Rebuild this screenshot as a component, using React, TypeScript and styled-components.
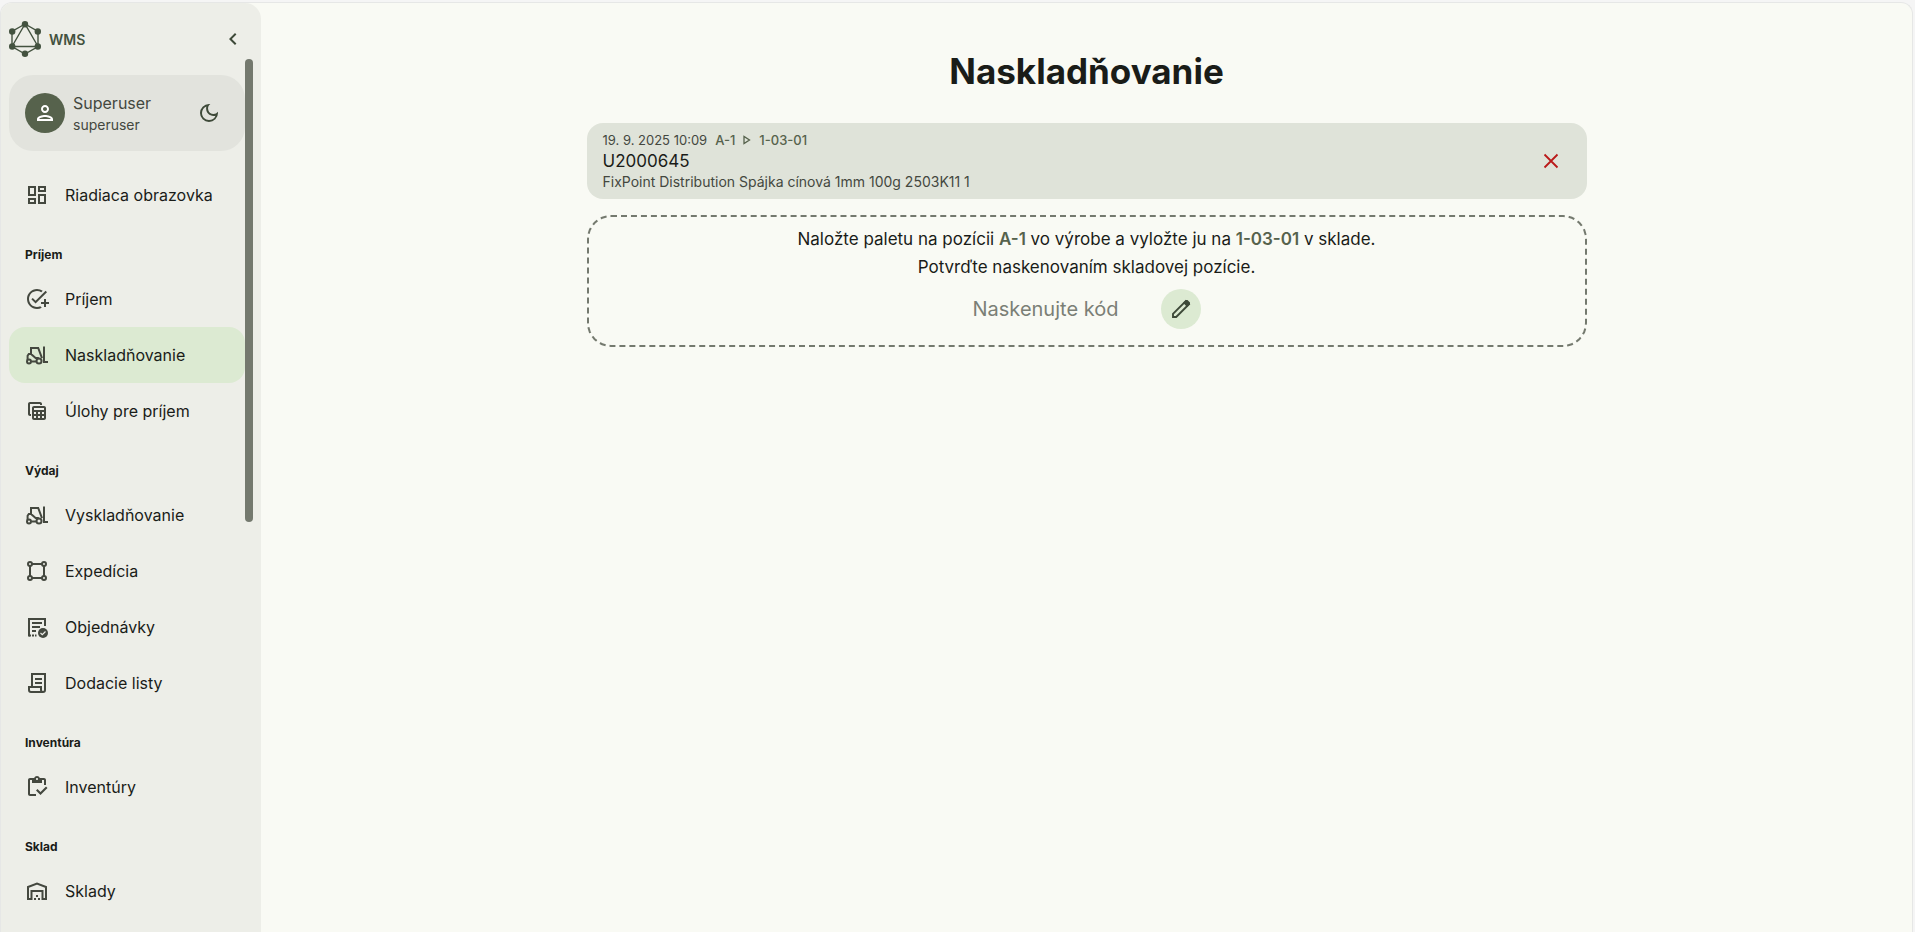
import React from "react";
import styled, { createGlobalStyle } from "styled-components";
import {
  MdAddTask,
  MdChevronLeft,
  MdOutlineDarkMode,
  MdOutlineDashboard,
  MdOutlineInventory,
  MdOutlinePerson,
  MdOutlineTableView,
} from "react-icons/md";

const GlobalStyle = createGlobalStyle`
  *, *::before, *::after { box-sizing: border-box; }
  body {
    margin: 0;
    background: #f5f5f5;
    color: #1a1c18;
    font-family: Inter, "Liberation Sans", sans-serif;
    font-size: 16px;
  }
  button, input { font: inherit; color: inherit; }
  h1, h2, p { margin: 0; }
`;

const Shell = styled.div`
  display: flex;
  height: calc(100vh - 2px);
  margin: 2px 2px 0 0;
  border: 1px solid #e6e7e6;
  border-bottom: 0;
  border-radius: 12px 12px 0 0;
  overflow: hidden;
  background: #f9faf4;
`;

const Sidebar = styled.aside`
  display: flex;
  flex-direction: column;
  flex: 0 0 260px;
  padding-top: 16px;
  border-radius: 0 16px 0 0;
  background: #edeee8;
`;

const SidebarHeader = styled.div`
  display: flex;
  align-items: center;
  gap: 8px;
  height: 40px;
  padding: 0 8px;
`;

const Brand = styled.span`
  flex: 1;
  color: #43523f;
  font-size: 14px;
  font-weight: 600;
`;

const IconButton = styled.button<{ $tone?: "plain" | "tonal" | "danger" }>`
  display: grid;
  place-items: center;
  flex: none;
  width: 40px;
  height: 40px;
  padding: 0;
  border: 0;
  border-radius: 50%;
  cursor: pointer;
  background: ${({ $tone }) => ($tone === "tonal" ? "#dcead2" : "transparent")};
  color: ${({ $tone }) => ($tone === "danger" ? "#ba1a1a" : "#3e4a39")};
`;

const ScrollArea = styled.div`
  position: relative;
  flex: 1;
  min-height: 0;
`;

const ScrollContent = styled.div`
  height: 100%;
  padding: 16px 16px 16px 8px;
  overflow-y: auto;
  scrollbar-width: none;
`;

const ScrollThumb = styled.div`
  position: absolute;
  top: 0;
  right: 8px;
  width: 8px;
  height: 53%;
  border-radius: 4px;
  background: #74796e;
`;

const Profile = styled.div`
  display: flex;
  align-items: center;
  gap: 8px;
  height: 76px;
  margin-bottom: 16px;
  padding: 0 16px;
  border-radius: 24px;
  background: #e2e3dd;
  color: #44483f;
`;

const Avatar = styled.span`
  display: grid;
  place-items: center;
  width: 40px;
  height: 40px;
  border-radius: 50%;
  background: #56624c;
  color: #fff;
`;

const ProfileText = styled.div`
  flex: 1;
  line-height: 24px;
`;

const ProfileLogin = styled.div`
  font-size: 14px;
  line-height: 20px;
`;

const NavHeading = styled.h2`
  margin-top: 16px;
  padding: 0 16px;
  font-size: 12px;
  font-weight: 700;
  line-height: 32px;
`;

const NavLink = styled.a<{ $active?: boolean }>`
  display: flex;
  align-items: center;
  gap: 16px;
  height: 56px;
  padding: 0 16px;
  border-radius: 16px;
  background: ${({ $active }) => ($active ? "#dcead2" : "transparent")};
  color: #1a1c18;
  line-height: 24px;
  text-decoration: none;

  svg { color: #44483f; }
`;

const Main = styled.main`
  flex: 1;
  min-width: 0;
  padding: 44px 16px 0;
`;

const Content = styled.div`
  display: flex;
  flex-direction: column;
  gap: 16px;
  max-width: 1000px;
  margin: 0 auto;
`;

const Title = styled.h1`
  margin-bottom: 12px;
  font-size: 35px;
  font-weight: 700;
  line-height: 48px;
  text-align: center;
`;

const Task = styled.section`
  display: flex;
  align-items: center;
  justify-content: space-between;
  min-height: 76px;
  padding: 8px 16px;
  border-radius: 16px;
  background: #dfe3d9;
`;

const TaskMeta = styled.div`
  display: flex;
  align-items: center;
  gap: 8px;
  color: #44483f;
  font-size: 13px;
  line-height: 16px;
`;

const Route = styled.span`
  display: flex;
  align-items: center;
  gap: 6px;
  color: #56624c;
  font-weight: 500;
`;

const TaskCode = styled.div`
  font-size: 17px;
  line-height: 26px;
`;

const TaskDetail = styled.div`
  color: #44483f;
  font-size: 14px;
  line-height: 16px;
`;

const ScanBox = styled.form`
  display: flex;
  flex-direction: column;
  align-items: center;
  gap: 8px;
  padding: 8px 16px 16px;
  border: 2px dashed #74796e;
  border-radius: 24px;
`;

const Instructions = styled.p`
  font-size: 17px;
  line-height: 28px;
  text-align: center;
`;

const Position = styled.strong`
  color: #56624c;
  font-weight: 600;
`;

const ScanRow = styled.div`
  display: flex;
  align-items: center;
  gap: 8px;
`;

const ScanInput = styled.input`
  width: 180px;
  height: 40px;
  padding: 0;
  border: 0;
  outline: 0;
  background: transparent;
  font-size: 20px;

  &::placeholder { color: #7b7f76; opacity: 1; }
`;

const Logo = () => (
  <svg width="32" height="36" viewBox="0 0 32 36" fill="none" stroke="#43523f" strokeWidth="1.4" aria-hidden="true">
    <path d="M16 3 3 10.5v15L16 33l13-7.500v-15z" />
    <path d="M16 3 3 25.500h26z" />
    <g fill="#43523f" stroke="none">
      <circle cx="16" cy="3.200" r="3.200" />
      <circle cx="3.200" cy="10.500" r="3.200" />
      <circle cx="28.800" cy="10.500" r="3.200" />
      <circle cx="3.200" cy="25.500" r="3.200" />
      <circle cx="28.800" cy="25.500" r="3.200" />
      <circle cx="16" cy="32.800" r="3.200" />
    </g>
  </svg>
);

const Forklift = () => (
  <svg width="24" height="24" viewBox="0 0 24 24" fill="none" stroke="currentColor" strokeWidth="2" aria-hidden="true">
    <path d="M6 11V5h7.200l3.800 10.200M6 11l4.600 4h3.200M6 11H3.800L2.600 12.800V17M6.500 18.500h5M19 3.500V19h4" />
    <circle cx="4" cy="18.500" r="2" />
    <circle cx="14" cy="18" r="2.500" />
  </svg>
);

const Zone = () => (
  <svg width="24" height="24" viewBox="0 0 24 24" fill="none" stroke="currentColor" strokeWidth="2" aria-hidden="true">
    <path d="M7 5h10M7 19h10M5 7v10M19 7v10" />
    <circle cx="5" cy="5" r="2" />
    <circle cx="19" cy="5" r="2" />
    <circle cx="5" cy="19" r="2" />
    <circle cx="19" cy="19" r="2" />
  </svg>
);

const OrderApproved = () => (
  <svg width="24" height="24" viewBox="0 0 24 24" fill="none" stroke="currentColor" strokeWidth="2" aria-hidden="true">
    <path d="M4 21.500V4h16v7M7 8h10M7 12h8M7 16h4" />
    <path d="M4 20.500h7.500" strokeDasharray="2 1" />
    <circle cx="18" cy="18" r="5" fill="currentColor" stroke="none" />
    <path d="m15.500 18 1.800 1.700 3.200-3.200" stroke="#edeee8" strokeWidth="1.200" />
  </svg>
);

const Receipt = () => (
  <svg width="24" height="24" viewBox="0 0 24 24" fill="none" stroke="currentColor" strokeWidth="2" aria-hidden="true">
    <path d="M7 16V3h13v16a2 2 0 0 1-4 0v-3H4v3a2 2 0 0 0 2 2h12M10 8h7M10 12h7" />
  </svg>
);

const Warehouse = () => (
  <svg width="24" height="24" viewBox="0 0 24 24" fill="none" stroke="currentColor" strokeWidth="2" aria-hidden="true">
    <path d="M3 20V8l9-3.500L21 8v12h-3.500v-8h-11v8z" />
    <path d="M9 19h2v2H9zM13 19h2v2h-2zM11 16h2v2h-2z" fill="currentColor" stroke="none" />
  </svg>
);

const Pencil = () => (
  <svg width="24" height="24" viewBox="0 0 24 24" fill="none" stroke="currentColor" strokeWidth="1.900" aria-hidden="true">
    <path d="M4 20v-3.200L16.800 4l3.200 3.200L7.200 20z" />
    <path d="M14 5.800 17 3h1.500L21 5.500V7l-2.800 3z" fill="currentColor" stroke="none" />
  </svg>
);

const Cross = () => (
  <svg width="24" height="24" viewBox="0 0 24 24" fill="none" stroke="currentColor" strokeWidth="1.800" aria-hidden="true">
    <path d="m5.500 5.500 13 13M18.500 5.500l-13 13" />
  </svg>
);

const Arrow = () => (
  <svg width="12" height="12" viewBox="0 0 12 12" fill="none" stroke="currentColor" strokeWidth="1.300" aria-hidden="true">
    <path d="M3 2.500v7L8.500 6z" />
  </svg>
);

type Item = { label: string; icon: React.ReactNode; active?: boolean };

const groups: { heading?: string; items: Item[] }[] = [
  { items: [{ label: "Riadiaca obrazovka", icon: <MdOutlineDashboard size={24} /> }] },
  {
    heading: "Príjem",
    items: [
      { label: "Príjem", icon: <MdAddTask size={24} /> },
      { label: "Naskladňovanie", icon: <Forklift />, active: true },
      { label: "Úlohy pre príjem", icon: <MdOutlineTableView size={24} /> },
    ],
  },
  {
    heading: "Výdaj",
    items: [
      { label: "Vyskladňovanie", icon: <Forklift /> },
      { label: "Expedícia", icon: <Zone /> },
      { label: "Objednávky", icon: <OrderApproved /> },
      { label: "Dodacie listy", icon: <Receipt /> },
    ],
  },
  { heading: "Inventúra", items: [{ label: "Inventúry", icon: <MdOutlineInventory size={24} /> }] },
  { heading: "Sklad", items: [{ label: "Sklady", icon: <Warehouse /> }] },
];

export default function App() {
  return (
    <>
      <GlobalStyle />
      <Shell>
        <Sidebar>
          <SidebarHeader>
            <Logo />
            <Brand>WMS</Brand>
            <IconButton type="button" aria-label="Zbaliť menu">
              <MdChevronLeft size={24} />
            </IconButton>
          </SidebarHeader>
          <ScrollArea>
            <ScrollContent>
              <Profile>
                <Avatar>
                  <MdOutlinePerson size={24} />
                </Avatar>
                <ProfileText>
                  Superuser
                  <ProfileLogin>superuser</ProfileLogin>
                </ProfileText>
                <IconButton type="button" aria-label="Tmavý režim">
                  <MdOutlineDarkMode size={24} />
                </IconButton>
              </Profile>
              <nav>
                {groups.map((group, index) => (
                  <div key={index}>
                    {group.heading && <NavHeading>{group.heading}</NavHeading>}
                    {group.items.map((item) => (
                      <NavLink
                        key={item.label}
                        href="#"
                        $active={item.active}
                        aria-current={item.active ? "page" : undefined}
                      >
                        {item.icon}
                        {item.label}
                      </NavLink>
                    ))}
                  </div>
                ))}
              </nav>
            </ScrollContent>
            <ScrollThumb />
          </ScrollArea>
        </Sidebar>
        <Main>
          <Content>
            <Title>Naskladňovanie</Title>
            <Task>
              <div>
                <TaskMeta>
                  <span>19. 9. 2025 10:09</span>
                  <Route>
                    A-1 <Arrow /> 1-03-01
                  </Route>
                </TaskMeta>
                <TaskCode>U2000645</TaskCode>
                <TaskDetail>FixPoint Distribution Spájka cínová 1mm 100g 2503K11 1</TaskDetail>
              </div>
              <IconButton type="button" $tone="danger" aria-label="Zrušiť">
                <Cross />
              </IconButton>
            </Task>
            <ScanBox onSubmit={(event) => event.preventDefault()}>
              <Instructions>
                Naložte paletu na pozícii <Position>A-1</Position> vo výrobe a vyložte ju na{" "}
                <Position>1-03-01</Position> v sklade.
                <br />
                Potvrďte naskenovaním skladovej pozície.
              </Instructions>
              <ScanRow>
                <ScanInput type="text" placeholder="Naskenujte kód" aria-label="Naskenujte kód" />
                <IconButton type="button" $tone="tonal" aria-label="Zadať ručne">
                  <Pencil />
                </IconButton>
              </ScanRow>
            </ScanBox>
          </Content>
        </Main>
      </Shell>
    </>
  );
}
